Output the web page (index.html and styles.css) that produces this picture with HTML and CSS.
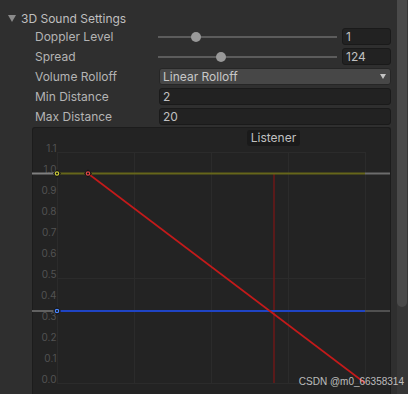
FILE: index.html
```html
<!DOCTYPE html>
<html lang="en">
<head>
  <meta charset="UTF-8" />
  <title>3D Sound Settings</title>
  <link rel="stylesheet" href="styles.css">
</head>
<body>
  <div class="inspector">
    <div class="main">
      <div class="foldout"><span class="fold-arrow"></span>3D Sound Settings</div>

      <div class="props">
        <div class="row">
          <label>Doppler Level</label>
          <div class="slider">
            <div class="track"><span class="knob" style="left:21.2%"></span></div>
            <div class="field num">1</div>
          </div>
        </div>
        <div class="row">
          <label>Spread</label>
          <div class="slider">
            <div class="track"><span class="knob" style="left:35.2%"></span></div>
            <div class="field num">124</div>
          </div>
        </div>
        <div class="row">
          <label>Volume Rolloff</label>
          <div class="popup">Linear Rolloff<span class="popup-arrow"></span></div>
        </div>
        <div class="row">
          <label>Min Distance</label>
          <div class="field wide">2</div>
        </div>
        <div class="row">
          <label>Max Distance</label>
          <div class="field wide">20</div>
        </div>

        <div class="graph">
          <svg class="curve" width="358" height="270" viewBox="0 0 358 270">
            <!-- grid -->
            <g stroke="#2b2b2b" stroke-width="1">
              <line x1="25.5" y1="24.5" x2="25.5" y2="255.5"/>
              <line x1="102.5" y1="24.5" x2="102.5" y2="255.5"/>
              <line x1="179.5" y1="24.5" x2="179.5" y2="255.5"/>
              <line x1="256.5" y1="24.5" x2="256.5" y2="255.5"/>
              <line x1="333.5" y1="24.5" x2="333.5" y2="255.5"/>
              <line x1="25" y1="24.5" x2="334" y2="24.5"/>
              <line x1="25" y1="150.5" x2="334" y2="150.5"/>
              <line x1="25" y1="255.5" x2="334" y2="255.5"/>
            </g>

            <!-- axis labels -->
            <g class="axis" text-anchor="end">
              <text x="24.5" y="23.5">1.1</text>
              <text x="24.5" y="44.5">1.0</text>
              <text x="24.5" y="65.5">0.9</text>
              <text x="24.5" y="86.5">0.8</text>
              <text x="24.5" y="107.5">0.7</text>
              <text x="24.5" y="128.5">0.6</text>
              <text x="24.5" y="149.5">0.5</text>
              <text x="24.5" y="170.5">0.4</text>
              <text x="24.5" y="191.5">0.3</text>
              <text x="24.5" y="212.5">0.2</text>
              <text x="24.5" y="233.5">0.1</text>
              <text x="24.5" y="254.5">0.0</text>
            </g>

            <!-- out of range continuation -->
            <line x1="0" y1="45.5" x2="25" y2="45.5" stroke="#808080" stroke-width="2"/>
            <line x1="333" y1="45.5" x2="358" y2="45.5" stroke="#6c6c6c" stroke-width="2"/>
            <line x1="0" y1="183" x2="25" y2="183" stroke="#616161" stroke-width="2"/>
            <line x1="333" y1="183" x2="358" y2="183" stroke="#505050" stroke-width="2"/>

            <!-- listener -->
            <line x1="242" y1="46" x2="242" y2="255" stroke="#6e1818" stroke-width="1.5"/>

            <!-- curves -->
            <line x1="25" y1="45.5" x2="333" y2="45.5" stroke="#66661a" stroke-width="2"/>
            <line x1="25" y1="183" x2="333" y2="183" stroke="#1f44c4" stroke-width="2"/>
            <line x1="56" y1="45.5" x2="333" y2="255" stroke="#c41a1a" stroke-width="1.6"/>

            <!-- keys -->
            <g class="key">
              <polygon points="25,41.5 29,45.5 25,49.5 21,45.5" fill="#141414"/>
              <circle cx="25" cy="45.5" r="1.7" fill="none" stroke="#c8c83a" stroke-width="1.2"/>
              <polygon points="56,41.5 60,45.5 56,49.5 52,45.5" fill="#141414"/>
              <circle cx="56" cy="45.5" r="1.7" fill="none" stroke="#e04848" stroke-width="1.2"/>
              <polygon points="25,179 29,183 25,187 21,183" fill="#141414"/>
              <circle cx="25" cy="183" r="1.7" fill="none" stroke="#4a86ff" stroke-width="1.2"/>
            </g>
          </svg>
          <div class="listener">Listener</div>
        </div>
      </div>
    </div>

    <div class="scrollbar"><div class="scroll-thumb"></div></div>

    <div class="watermark">CSDN @m0_66358314</div>
  </div>
</body>
</html>
```

FILE: styles.css
```css
body {
  margin: 0;
  padding: 0;
  background-color: #2f2f2f;
  font-family: Inter, "Noto Sans", sans-serif;
  font-size: 12px;
  color: #bcbcbc;
}

.inspector {
  position: relative;
  display: flex;
  width: 408px;
  height: 394px;
  overflow: hidden;
  background-color: #2f2f2f;
}

.main {
  flex: 1;
  padding: 9px 6px 0 7px;
}

.foldout {
  display: flex;
  align-items: center;
  height: 18px;
  margin-bottom: 1px;
  color: #bfbfbf;
}

.fold-arrow {
  width: 0;
  height: 0;
  margin: 0 5px 0 1px;
  border-left: 4px solid transparent;
  border-right: 4px solid transparent;
  border-top: 7px solid #8a8a8a;
}

.props {
  padding-left: 26px;
  display: flex;
  flex-direction: column;
  gap: 3px;
}

.row {
  display: flex;
  align-items: center;
  height: 17px;
}

.row label {
  flex: 0 0 123px;
  padding-left: 2px;
  color: #b4b4b4;
}

.slider {
  flex: 1;
  display: flex;
  align-items: center;
  gap: 5px;
}

.track {
  position: relative;
  flex: 1;
  height: 2px;
  background-color: #5c5c5c;
}

.knob {
  position: absolute;
  top: -4px;
  width: 10px;
  height: 10px;
  margin-left: -5px;
  border-radius: 50%;
  background-color: #999999;
}

.field {
  box-sizing: border-box;
  height: 17px;
  line-height: 15px;
  padding-left: 3px;
  background-color: #222222;
  border: 1px solid #1a1a1a;
  border-radius: 3px;
  color: #c0c0c0;
}

.num {
  flex: 0 0 49px;
}

.wide {
  flex: 1;
  margin-left: 1px;
}

.popup {
  flex: 1;
  box-sizing: border-box;
  display: flex;
  align-items: center;
  justify-content: space-between;
  height: 17px;
  margin-left: 1px;
  padding: 0 4px 0 3px;
  background-color: #474747;
  border: 1px solid #262626;
  border-radius: 3px;
  color: #c8c8c8;
}

.popup-arrow {
  width: 0;
  height: 0;
  border-left: 3.5px solid transparent;
  border-right: 3.5px solid transparent;
  border-top: 5px solid #c4c4c4;
}

.graph {
  position: relative;
  height: 270px;
  margin-top: -1px;
  margin-left: -1px;
  background-color: #232323;
  border-top: 1px solid #1c1c1c;
  border-left: 1px solid #1c1c1c;
  border-right: 1px solid #1c1c1c;
  border-radius: 3px 3px 0 0;
}

.curve {
  display: block;
  margin-left: -1px;
}

.axis text {
  font-family: Inter, "Noto Sans", sans-serif;
  font-size: 10px;
  fill: #525252;
}

.listener {
  position: absolute;
  left: 214px;
  top: 2px;
  width: 53px;
  height: 16px;
  line-height: 16px;
  text-align: center;
  background-color: #1a1a1a;
  border-radius: 3px;
  color: #c0c0c0;
}

.scrollbar {
  width: 11px;
  background-color: #363636;
}

.scroll-thumb {
  height: 307px;
  margin: 0 1px 0 0;
  background-color: #4a4a4a;
  border-radius: 0 0 5px 5px;
}

.watermark {
  position: absolute;
  right: 4px;
  bottom: 7px;
  font-family: "Liberation Sans", Arial, sans-serif;
  font-size: 10px;
  color: rgba(255, 255, 255, 0.7);
}
```
